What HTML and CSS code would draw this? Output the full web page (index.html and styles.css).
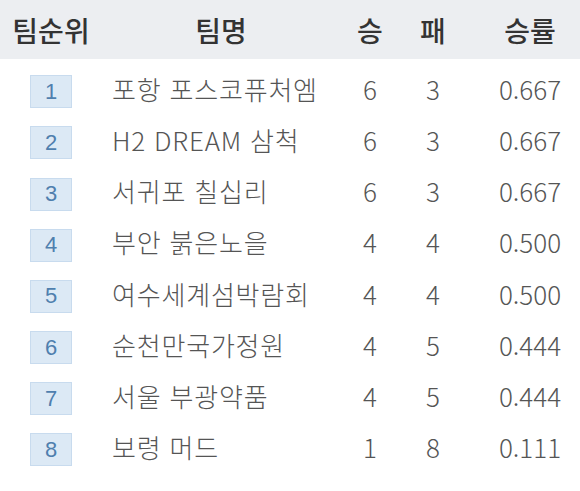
FILE: index.html
```html
<!DOCTYPE html>
<html lang="ko">
<head>
<meta charset="utf-8">
<link rel="stylesheet" href="styles.css">
</head>
<body>
<div class="table">
  <div class="row head">
    <div class="c rank">팀순위</div>
    <div class="c name">팀명</div>
    <div class="c w">승</div>
    <div class="c l">패</div>
    <div class="c pct">승률</div>
  </div>
  <div class="row"><div class="c rank"><span class="badge">1</span></div><div class="c name">포항 포스코퓨처엠</div><div class="c w">6</div><div class="c l">3</div><div class="c pct">0.667</div></div>
  <div class="row"><div class="c rank"><span class="badge">2</span></div><div class="c name">H2 DREAM 삼척</div><div class="c w">6</div><div class="c l">3</div><div class="c pct">0.667</div></div>
  <div class="row"><div class="c rank"><span class="badge">3</span></div><div class="c name">서귀포 칠십리</div><div class="c w">6</div><div class="c l">3</div><div class="c pct">0.667</div></div>
  <div class="row"><div class="c rank"><span class="badge">4</span></div><div class="c name">부안 붉은노을</div><div class="c w">4</div><div class="c l">4</div><div class="c pct">0.500</div></div>
  <div class="row"><div class="c rank"><span class="badge">5</span></div><div class="c name">여수세계섬박람회</div><div class="c w">4</div><div class="c l">4</div><div class="c pct">0.500</div></div>
  <div class="row"><div class="c rank"><span class="badge">6</span></div><div class="c name">순천만국가정원</div><div class="c w">4</div><div class="c l">5</div><div class="c pct">0.444</div></div>
  <div class="row"><div class="c rank"><span class="badge">7</span></div><div class="c name">서울 부광약품</div><div class="c w">4</div><div class="c l">5</div><div class="c pct">0.444</div></div>
  <div class="row"><div class="c rank"><span class="badge">8</span></div><div class="c name">보령 머드</div><div class="c w">1</div><div class="c l">8</div><div class="c pct">0.111</div></div>
</div>
</body>
</html>
```

FILE: styles.css
```css
html, body {
  margin: 0;
  padding: 0;
  background: #ffffff;
}
body {
  font-family: "Noto Sans CJK KR", "Noto Sans", sans-serif;
  color: #555555;
  width: 580px;
}
.table {
  display: flex;
  flex-direction: column;
}
.row {
  display: grid;
  grid-template-columns: 102px 238px 60px 66px 114px;
  align-items: center;
  height: 51.15px;
  font-size: 26px;
  font-weight: 300;
}
.row.head {
  height: 59px;
  background: #eceef1;
  color: #333333;
  font-size: 28px;
  font-weight: 500;
  margin-bottom: 4px;
}
.c {
  text-align: center;
  white-space: nowrap;
}
.head .name {
  text-align: center;
  padding-left: 0;
  letter-spacing: 0;
}
.name {
  text-align: left;
  padding-left: 10px;
  letter-spacing: 0.8px;
}
.pct {
  padding-left: 14px;
}
.badge {
  display: inline-flex;
  align-items: center;
  justify-content: center;
  box-sizing: border-box;
  width: 42px;
  height: 33px;
  background: #dce9f5;
  border: 1px solid #c8dbee;
  color: #4f7fae;
  font-size: 22px;
  font-weight: normal;
  font-family: "Liberation Sans", "Noto Sans", sans-serif;
}
```
